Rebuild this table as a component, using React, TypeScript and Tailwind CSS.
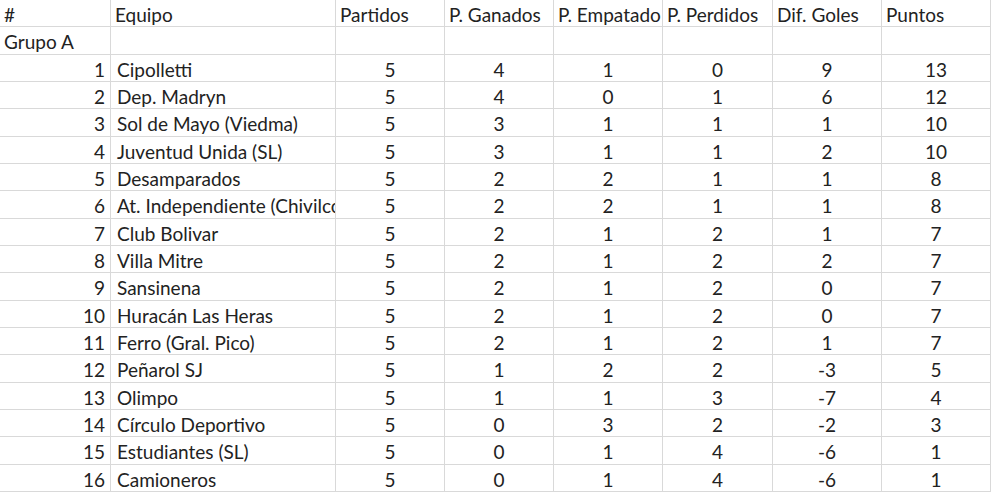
const headers = ["#", "Equipo", "Partidos", "P. Ganados", "P. Empatado", "P. Perdidos", "Dif. Goles", "Puntos"];

const rows: [number, string, number, number, number, number, number, number][] = [
  [1, "Cipolletti", 5, 4, 1, 0, 9, 13],
  [2, "Dep. Madryn", 5, 4, 0, 1, 6, 12],
  [3, "Sol de Mayo (Viedma)", 5, 3, 1, 1, 1, 10],
  [4, "Juventud Unida (SL)", 5, 3, 1, 1, 2, 10],
  [5, "Desamparados", 5, 2, 2, 1, 1, 8],
  [6, "At. Independiente (Chivilcoy)", 5, 2, 2, 1, 1, 8],
  [7, "Club Bolivar", 5, 2, 1, 2, 1, 7],
  [8, "Villa Mitre", 5, 2, 1, 2, 2, 7],
  [9, "Sansinena", 5, 2, 1, 2, 0, 7],
  [10, "Huracán Las Heras", 5, 2, 1, 2, 0, 7],
  [11, "Ferro (Gral. Pico)", 5, 2, 1, 2, 1, 7],
  [12, "Peñarol SJ", 5, 1, 2, 2, -3, 5],
  [13, "Olimpo", 5, 1, 1, 3, -7, 4],
  [14, "Círculo Deportivo", 5, 0, 3, 2, -2, 3],
  [15, "Estudiantes (SL)", 5, 0, 1, 4, -6, 1],
  [16, "Camioneros", 5, 0, 1, 4, -6, 1],
];

const cell = "border-r border-b border-[#d9d9d9] overflow-hidden whitespace-nowrap flex items-center pt-[3px]";

export default function App() {
  return (
    <div
      className="w-[992px] h-[493px] overflow-hidden bg-white text-[#222222] text-[19px] leading-none"
      style={{ fontFamily: "Lato, 'Liberation Sans', sans-serif" }}
    >
      <div className="grid grid-cols-[111px_225px_109px_109px_109px_110px_109px_109px] auto-rows-[27.33px]">
        {/* header */}
        {headers.map((h) => (
          <div key={h} className={`${cell} pl-[4px]`}>
            {h}
          </div>
        ))}

        {/* group label */}
        <div className={`${cell} pl-[4px]`}>Grupo A</div>
        {headers.slice(1).map((h) => (
          <div key={"g" + h} className={cell} />
        ))}

        {/* teams */}
        {rows.map(([pos, team, pj, pg, pe, pp, dif, pts]) => (
          <div key={pos} className="contents">
            <div className={`${cell} justify-end pr-[5px]`}>{pos}</div>
            <div className={`${cell} pl-[6px]`}>{team}</div>
            <div className={`${cell} justify-center`}>{pj}</div>
            <div className={`${cell} justify-center`}>{pg}</div>
            <div className={`${cell} justify-center`}>{pe}</div>
            <div className={`${cell} justify-center`}>{pp}</div>
            <div className={`${cell} justify-center`}>{dif}</div>
            <div className={`${cell} justify-center`}>{pts}</div>
          </div>
        ))}
      </div>
    </div>
  );
}
